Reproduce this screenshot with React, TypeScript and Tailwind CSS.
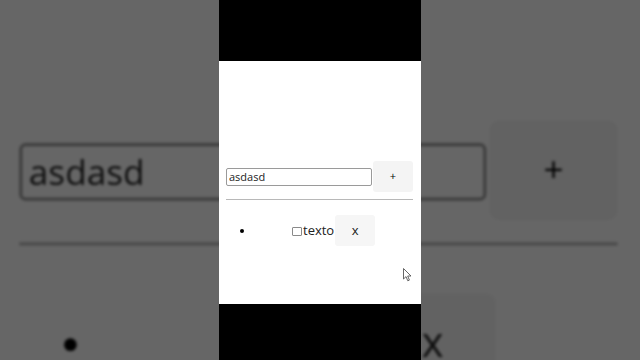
import React from 'react';

// The list panel itself, reused for the blurred zoomed backdrop
function Panel() {
  return (
    <div className="w-[202px] h-[243px] bg-white pt-[100px] px-[7px] font-['Open_Sans',sans-serif] text-[#222]">
      <div className="flex items-center">
        <div className="w-[146px] h-[18px] border border-[#9a9a9a] rounded-[2px] px-[2px] flex items-center text-[11px] leading-none">
          asdasd
        </div>
        <div className="ml-[1px] w-[40px] h-[31px] bg-[#f4f4f4] rounded-[3px] flex items-center justify-center text-[11px] text-black">
          +
        </div>
      </div>
      <div className="mt-[7px] w-[187px] h-[1px] bg-[#b8b8b8]" />
      <div className="mt-[15px] h-[31px] flex items-center">
        <span className="ml-[14px] w-[4px] h-[4px] rounded-full bg-black" />
        <span className="ml-[48px] w-[10px] h-[9px] border border-[#8a8a8a] rounded-[1px] mt-[1px]" />
        <span className="ml-[1px] text-[13px] leading-none">texto</span>
        <div className="ml-[1px] w-[40px] h-[31px] bg-[#f6f6f6] rounded-[3px] flex items-center justify-center text-[13px] leading-none pb-[1px]">
          x
        </div>
      </div>
    </div>
  );
}

function Cursor() {
  return (
    <svg width="10" height="15" viewBox="0 0 10 15" className="absolute left-[403px] top-[268px]">
      <path d="M0.5 0.5 L0.5 11 L3 8.6 L4.8 12.8 L6.4 12.1 L4.7 8 L8 8 Z" fill="white" stroke="#555" strokeWidth="0.9" strokeLinejoin="round" />
    </svg>
  );
}

export default function App() {
  return (
    <div className="relative w-[640px] h-[360px] overflow-hidden bg-[#666]">
      {/* blurred enlarged copy behind the video column */}
      <div className="absolute inset-0 flex justify-center items-start pt-[61px] blur-[1.5px] brightness-[0.4]">
        <div className="translate-y-[7px] scale-[3.2]">
          <Panel />
        </div>
      </div>

      <div className="relative flex justify-center h-full">
        <div className="w-[202px] flex flex-col">
          <div className="h-[61px] bg-black" />
          <Panel />
          <div className="flex-1 bg-black" />
        </div>
      </div>

      <Cursor />
    </div>
  );
}
